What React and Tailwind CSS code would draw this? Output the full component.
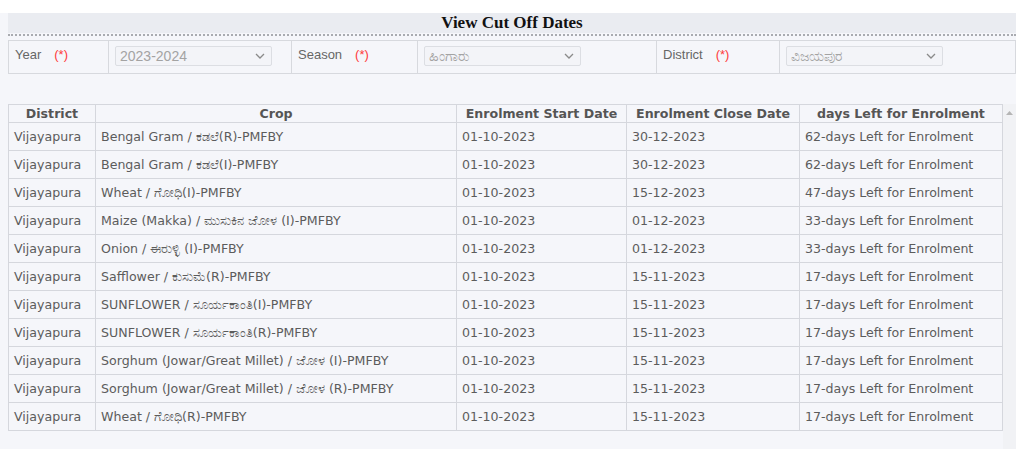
import React from 'react';

const rows = [
  ['Bengal Gram / ಕಡಲೆ(R)-PMFBY', '30-12-2023', '62'],
  ['Bengal Gram / ಕಡಲೆ(I)-PMFBY', '30-12-2023', '62'],
  ['Wheat / ಗೋಧಿ(I)-PMFBY', '15-12-2023', '47'],
  ['Maize (Makka) / ಮುಸುಕಿನ ಜೋಳ (I)-PMFBY', '01-12-2023', '33'],
  ['Onion / ಈರುಳ್ಳಿ (I)-PMFBY', '01-12-2023', '33'],
  ['Safflower / ಕುಸುಮೆ(R)-PMFBY', '15-11-2023', '17'],
  ['SUNFLOWER / ಸೂರ್ಯಕಾಂತಿ(I)-PMFBY', '15-11-2023', '17'],
  ['SUNFLOWER / ಸೂರ್ಯಕಾಂತಿ(R)-PMFBY', '15-11-2023', '17'],
  ['Sorghum (Jowar/Great Millet) / ಜೋಳ (I)-PMFBY', '15-11-2023', '17'],
  ['Sorghum (Jowar/Great Millet) / ಜೋಳ (R)-PMFBY', '15-11-2023', '17'],
  ['Wheat / ಗೋಧಿ(R)-PMFBY', '15-11-2023', '17'],
];

const Chevron = () => (
  <svg width="10" height="6" viewBox="0 0 10 6" className="shrink-0">
    <path d="M1 1l4 4 4-4" fill="none" stroke="#8a8a8a" strokeWidth="1.3" />
  </svg>
);

const Label = ({ text }) => (
  <div className="flex items-center h-full pl-[6px] pb-[4px] text-[13px] text-[#666]">
    <span>{text}</span>
    <span className="ml-[13px] text-[#ff3b3b]">(*)</span>
  </div>
);

const Select = ({ value }) => (
  <div className="flex items-center h-full pl-[6px] pb-[2px]">
    <div className="w-[157px] h-[20px] border border-[#dcdee3] rounded-[2px] bg-[#f3f4f8] flex items-center justify-between pl-[4px] pr-[6px] text-[14px] text-[#a3a3a3]">
      <span className="leading-none">{value}</span>
      <Chevron />
    </div>
  </div>
);

const Cell = ({ children }) => (
  <td className="border border-[#d5d7dd] px-[5px] py-0 text-left font-normal align-middle">
    <div className="h-[16px] leading-[16px] whitespace-nowrap">{children}</div>
  </td>
);

const App = () => {
  return (
    <div className="w-[1024px] h-[449px] bg-white pt-[13px] overflow-hidden">
      <div className="w-[1016px] h-[436px] bg-[#f5f6fa] pl-[8px]" style={{ fontFamily: '"DejaVu Sans", Verdana, sans-serif' }}>
        <div className="h-[20px] bg-[#eaecf1] flex items-center justify-center text-[17px] font-bold text-[#111]" style={{ fontFamily: '"Liberation Serif", serif' }}>
          View Cut Off Dates
        </div>
        <div className="border-b-2 border-dotted border-[#a9abb0] mt-[1px]" />
        <div className="mt-[4px] h-[34px] border border-[#d7d9de] flex" style={{ fontFamily: '"Liberation Sans", Arial, sans-serif' }}>
          <div className="w-[100px] border-r border-[#d7d9de]"><Label text="Year" /></div>
          <div className="w-[183px] border-r border-[#d7d9de]"><Select value="2023-2024" /></div>
          <div className="w-[126px] border-r border-[#d7d9de]"><Label text="Season" /></div>
          <div className="w-[239px] border-r border-[#d7d9de]"><Select value="ಹಿಂಗಾರು" /></div>
          <div className="w-[123px] border-r border-[#d7d9de]"><Label text="District" /></div>
          <div className="flex-1"><Select value="ವಿಜಯಪುರ" /></div>
        </div>
        <div className="mt-[30px] flex items-start">
          <table className="w-[994px] border-collapse text-[12.6px] text-[#5c5c5c] table-fixed">
            <colgroup>
              <col className="w-[87px]" />
              <col className="w-[361px]" />
              <col className="w-[170px]" />
              <col className="w-[173px]" />
              <col className="w-[203px]" />
            </colgroup>
            <thead>
              <tr className="h-[18px]">
                {['District', 'Crop', 'Enrolment Start Date', 'Enrolment Close Date', 'days Left for Enrolment'].map((h) => (
                  <th key={h} className="border border-[#d5d7dd] px-[5px] py-0 text-center font-bold text-[#555] leading-[15px]">{h}</th>
                ))}
              </tr>
            </thead>
            <tbody>
              {rows.map((r, i) => (
                <tr key={i} className="h-[28px]">
                  <Cell>Vijayapura</Cell>
                  <Cell>{r[0]}</Cell>
                  <Cell>01-10-2023</Cell>
                  <Cell>{r[1]}</Cell>
                  <Cell>{r[2]}-days Left for Enrolment</Cell>
                </tr>
              ))}
            </tbody>
          </table>
          <div className="w-[14px] h-[350px] bg-[#f1f2f5] flex justify-center pt-[7px]">
            <svg width="7" height="4" viewBox="0 0 7 4">
              <path d="M0 4L3.5 0 7 4z" fill="#b5b5b5" />
            </svg>
          </div>
        </div>
      </div>
    </div>
  );
};

export default App;
